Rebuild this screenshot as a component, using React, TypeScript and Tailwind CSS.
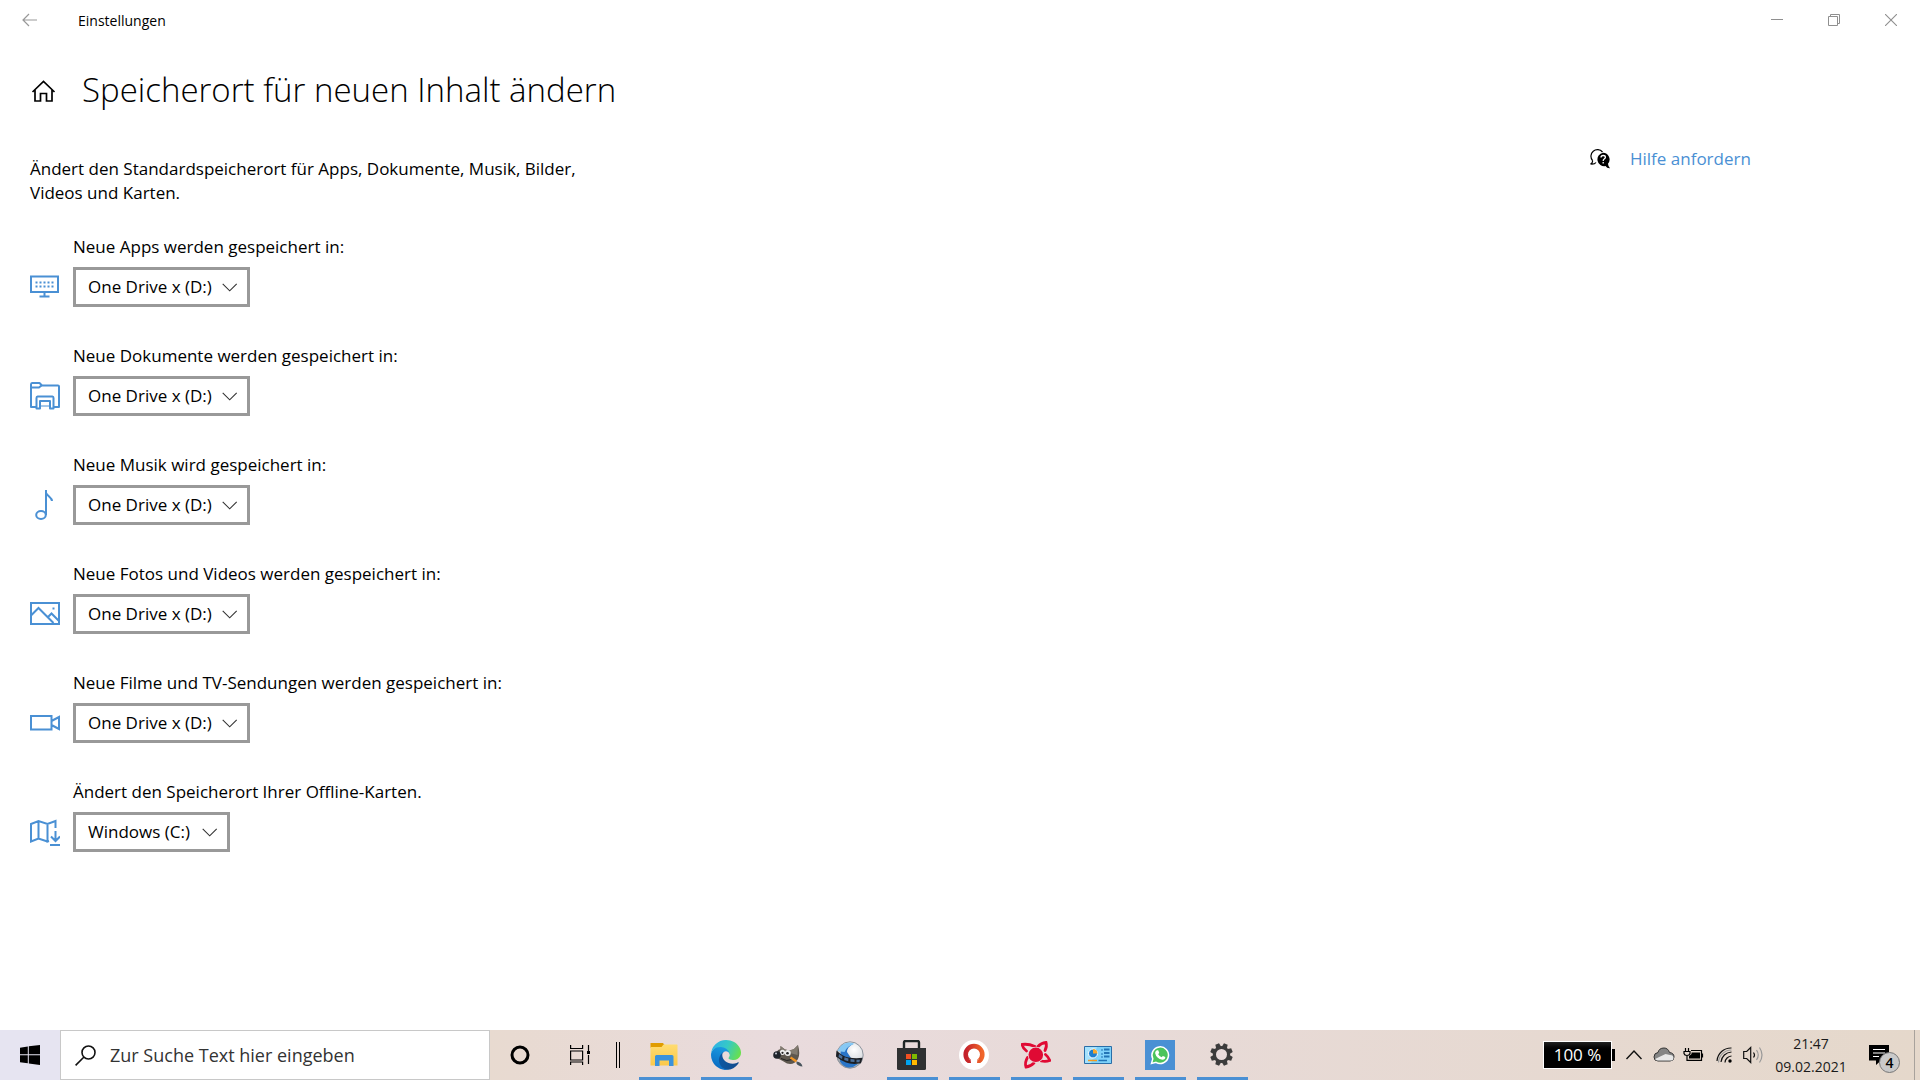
import type { ReactNode } from "react";

const BLUE = "#4a90d4";

/* ---------- content icons ---------- */

function Monitor() {
  return (
    <svg width="30" height="30" viewBox="0 0 30 30" fill="none" stroke={BLUE} strokeWidth="2">
      <path d="M1 4.500h27v15.500H1zM14.500 20.500v4M9.500 24.500h10" />
      <path d="M5.500 10.500h18M5.500 14.500h18" strokeDasharray="2 2" />
    </svg>
  );
}

function Folder() {
  return (
    <svg width="30" height="30" viewBox="0 0 30 30" fill="none" stroke={BLUE} strokeWidth="2" strokeLinejoin="round">
      <path d="M6 26H1V3.500q0-1.500 1-1.500h7.500l2.500 2.500H28q1 0 1 1V26h-5" />
      <path d="M1 6.500h8l2.500-2" />
      <path d="M6.500 27.500V17q0-1.500 1-1.500h15q1 0 1 1.500v10.500h-3.500V20H10v7.500z" />
      <path d="M10 25h10" strokeWidth="1" />
    </svg>
  );
}

function Note() {
  return (
    <svg width="30" height="30" viewBox="0 0 30 30" fill="none" stroke={BLUE} strokeWidth="2">
      <ellipse cx="11" cy="25" rx="4.800" ry="3.900" />
      <path d="M16 25V0M16 3c2 3.500 6 4.500 6 8" />
    </svg>
  );
}

function Picture() {
  return (
    <svg width="30" height="30" viewBox="0 0 30 30" fill="none" stroke={BLUE} strokeWidth="2">
      <path d="M1 4h28v21H1zM1 16.500l7.500-7.500L23.500 24M17.500 18.500l4-4L28.500 21.500" />
      <path d="M22.500 9.500h2" />
    </svg>
  );
}

function Camera() {
  return (
    <svg width="30" height="30" viewBox="0 0 30 30" fill="none" stroke={BLUE} strokeWidth="2">
      <path d="M1 8h20.500v13.500H1zM21.500 13l7.500-4v12l-7.500-4" />
    </svg>
  );
}

function OfflineMap() {
  return (
    <svg width="30" height="30" viewBox="0 0 30 30" fill="none" stroke={BLUE} strokeWidth="2">
      <path d="M17.500 24.500L8.500 21.500 1 24.500V7l7.500-3 9 3L25.500 4v7M8.500 4v17.500M17.500 7v17.500l1.500-.5M25.500 14v10M21 19.500l4.500 4.500 4.500-4.500M20 28h10" />
    </svg>
  );
}

/* ---------- storage rows ---------- */

type Row = { id: string; label: string; value: string; icon: ReactNode; width: string };

const rows: Row[] = [
  { id: "apps", label: "Neue Apps werden gespeichert in:", value: "One Drive x (D:)", icon: <Monitor />, width: "w-[177px]" },
  { id: "docs", label: "Neue Dokumente werden gespeichert in:", value: "One Drive x (D:)", icon: <Folder />, width: "w-[177px]" },
  { id: "music", label: "Neue Musik wird gespeichert in:", value: "One Drive x (D:)", icon: <Note />, width: "w-[177px]" },
  { id: "photos", label: "Neue Fotos und Videos werden gespeichert in:", value: "One Drive x (D:)", icon: <Picture />, width: "w-[177px]" },
  { id: "films", label: "Neue Filme und TV-Sendungen werden gespeichert in:", value: "One Drive x (D:)", icon: <Camera />, width: "w-[177px]" },
  { id: "maps", label: "Ändert den Speicherort Ihrer Offline-Karten.", value: "Windows (C:)", icon: <OfflineMap />, width: "w-[157px]" },
];

function StorageRow({ row }: { row: Row }) {
  return (
    <div className="grid grid-cols-[43px_auto] justify-start gap-y-2">
      <label htmlFor={row.id} className="col-start-2 leading-6">
        {row.label}
      </label>
      <span className="row-start-2 flex items-center">{row.icon}</span>
      <div className={`relative row-start-2 ${row.width}`}>
        <select
          id={row.id}
          defaultValue={row.value}
          className="block h-10 w-full appearance-none border-3 border-[#999999] bg-white pl-3 text-[17px]"
        >
          <option>{row.value}</option>
        </select>
        <svg className="pointer-events-none absolute top-4 right-3" width="16" height="9" viewBox="0 0 16 9" fill="none" stroke="#333" strokeWidth="1.1">
          <path d="M.7 .8l7 7 7-7" />
        </svg>
      </div>
    </div>
  );
}

/* ---------- taskbar icons ---------- */

function Explorer() {
  return (
    <svg width="30" height="30" viewBox="0 0 30 30">
      <defs>
        <linearGradient id="fold" x1="0" y1="0" x2="0" y2="1">
          <stop offset="0" stopColor="#ffdc70" />
          <stop offset="1" stopColor="#fbc84a" />
        </linearGradient>
      </defs>
      <path d="M1.500 3h12.500l1.500 2-2 3h-12z" fill="#e09c00" />
      <path d="M1.500 7h11l2-2.500h13.500q.5 0 .5.500v20.500h-27z" fill="url(#fold)" />
      <path d="M6 26V16.500q0-1.500 1.500-1.500h15.500q1.500 0 1.500 1.500V26h-4.500v-5.500h-9.500V26z" fill="#3a92dc" />
    </svg>
  );
}

function Edge() {
  return (
    <svg width="30" height="30" viewBox="0 0 256 256">
      <defs>
        <linearGradient id="e1" x1="0" x2="1">
          <stop offset="0" stopColor="#0c59a4" />
          <stop offset="1" stopColor="#114a8b" />
        </linearGradient>
        <linearGradient id="e2" x1="0.6" y1="0" x2="0.3" y2="1">
          <stop offset="0" stopColor="#1b9de2" />
          <stop offset="1" stopColor="#0767c0" />
        </linearGradient>
        <linearGradient id="e3" x1="0" y1="0.3" x2="1" y2="0.6">
          <stop offset="0" stopColor="#2fb0e8" />
          <stop offset="0.5" stopColor="#36c9c6" />
          <stop offset="1" stopColor="#69e04c" />
        </linearGradient>
      </defs>
      <path fill="url(#e1)" d="M231 190.500c-3.400 1.800-6.900 3.400-10.500 4.700a102 102 0 0 1-35.900 6.500c-47.300 0-88.500-32.500-88.500-74.300.1-11.400 6.400-21.900 16.400-27.300-42.800 1.800-53.800 46.400-53.800 72.500 0 74 68.100 81.400 82.800 81.400 7.900 0 19.800-2.300 27-4.600l1.300-.4a128.300 128.300 0 0 0 66.600-52.800 4 4 0 0 0-5.400-5.700z" />
      <path fill="url(#e2)" d="M105.700 241.400a79.200 79.200 0 0 1-22.700-21.300 80.700 80.700 0 0 1 29.500-120c3.200-1.500 8.500-4.200 15.600-4.100a32.400 32.400 0 0 1 25.700 13 31.900 31.900 0 0 1 6.300 18.700c0-.2 24.500-79.600-80-79.600-43.900 0-80 41.600-80 78.200a130.200 130.200 0 0 0 12.100 56 128 128 0 0 0 156.400 67 75.600 75.600 0 0 1-62.800-8z" />
      <path fill="url(#e3)" d="M152.300 148.900c-.9 1-3.300 2.500-3.300 5.700 0 2.600 1.700 5.100 4.700 7.200 14.400 10 41.500 8.700 41.600 8.700 10.700 0 21.100-2.900 30.300-8.300A61.400 61.400 0 0 0 256 109.200c.3-22.400-8-37.300-11.300-43.900C223.500 23.900 177.700 0 128 0A128 128 0 0 0 0 126.200c.5-36.500 36.800-66 80-66 3.500 0 23.500.3 42 10 16.300 8.600 24.900 18.900 30.800 29.200 6.200 10.700 7.300 24.100 7.300 29.500s-2.700 13.300-7.800 20z" />
    </svg>
  );
}

function Gimp() {
  return (
    <svg width="30" height="30" viewBox="0 0 30 30">
      <path d="M7.500 6l4.500 3.500q6 1.500 9-.5l4-4q2.500 9 0 14-4 6.500-11 4.500-4-2.500-11-6-1-7 4.500-8.500z" fill="#5d574e" />
      <path d="M7.500 6l4.500 3.500q6 1.500 9-.5l4-4-.5 10q-9-3-17-3z" fill="#827b70" />
      <circle cx="9.500" cy="12.300" r="2.600" fill="#eee" />
      <circle cx="14.800" cy="13" r="3" fill="#eee" />
      <circle cx="9.500" cy="12.800" r="1.100" fill="#222" />
      <circle cx="14.500" cy="13.300" r="1.300" fill="#222" />
      <ellipse cx="4" cy="15" rx="3.800" ry="3.800" fill="#20242b" />
      <circle cx="3" cy="13.500" r="1" fill="#c7cdd6" />
      <path d="M8 18.500q6 3.500 11 1" stroke="#222" fill="none" />
      <path d="M17.500 17.500l6 4" stroke="#ef9424" strokeWidth="2.200" />
      <path d="M23.500 21.500q5 .5 6 5-4.500-.5-6-3z" fill="#49545c" />
    </svg>
  );
}

function OpenShot() {
  return (
    <svg width="30" height="30" viewBox="0 0 30 30">
      <defs>
        <radialGradient id="os" cx="0.65" cy="0.3" r="0.8">
          <stop offset="0" stopColor="#fff" />
          <stop offset="0.6" stopColor="#d5d8dc" />
          <stop offset="1" stopColor="#8a9098" />
        </radialGradient>
      </defs>
      <circle cx="15" cy="15" r="13.200" fill="url(#os)" stroke="#8d949d" strokeWidth="1" />
      <path d="M6 6Q12 3 18 4q-6 3-6 8l4 6q2 6 7 6-5 4-10 3.500-5-1-8-6z" fill="#2a75c8" />
      <path d="M2.500 11Q6 3 14 2.500q4 0 5 1.500-7 2-9.500 8z" fill="#86c8f4" />
      <path d="M1.500 10.500q6 6 12 7 7 1.200 14 .3l-1.500 5.500q-9 1.500-15-.8-5.500-2-10-6z" fill="#1c1f24" />
      <path d="M4 14l3.500 2.200-.5 2.800-3.500-2zM9.500 17.200l4 1.300-.3 2.800-4-1.300zM15.500 19l4 .4v2.700l-4-.4zM21.500 19.800h3.500l-.6 2.400h-3z" fill="#4d7099" />
    </svg>
  );
}

function Store() {
  return (
    <svg width="30" height="30" viewBox="0 0 30 30">
      <path d="M7 9V2.500Q7 1 8.500 1h12Q22 1 22 2.500V9" fill="none" stroke="#1f2626" strokeWidth="2.400" />
      <path d="M0 8h29v20.500q0 1.500-1.500 1.500h-26Q0 30 0 28.500z" fill="#2f3132" />
      <path d="M9 14h5v5H9z" fill="#f25022" />
      <path d="M15 14h5v5h-5z" fill="#7fba00" />
      <path d="M9 20h5v5H9z" fill="#00a4ef" />
      <path d="M15 20h5v5h-5z" fill="#ffb900" />
    </svg>
  );
}

function Horseshoe() {
  return (
    <svg width="30" height="30" viewBox="0 0 30 30">
      <defs>
        <linearGradient id="hs">
          <stop offset="0" stopColor="#c4212b" />
          <stop offset="1" stopColor="#f0652a" />
        </linearGradient>
      </defs>
      <circle cx="15" cy="15" r="15" fill="#fff" />
      <path d="M9.300 20.500a8.300 8.300 0 1 1 11.400 0" fill="none" stroke="url(#hs)" strokeWidth="4.600" />
      <path d="M7 20.500l4.500-1.500.5 4H8.500z" fill="#c92a2b" />
      <path d="M23 20.500L18.500 19l-.5 4h3.500z" fill="#e9592a" />
    </svg>
  );
}

function RedStar() {
  return (
    <svg width="30" height="30" viewBox="0 0 30 30">
      <g fill="none" stroke="#e00a34" strokeWidth="2.200" strokeLinecap="round">
        <path d="M5.500 11Q1.500 8 1.200 4.500 7 3.500 14 6.500" strokeWidth="2.800" />
        <path d="M17 6.500Q20 3 25 2.500q1.200 4-1 8" strokeWidth="2.800" />
        <path d="M24.500 14.500q3 2.500 4.300 6-4 1.500-8.500.5" strokeWidth="2.800" />
        <path d="M6.500 17.500Q3.500 22.500 5 27q4.500-.5 8-4" strokeWidth="2.800" />
      </g>
      <circle cx="14.800" cy="14.800" r="8" fill="#e9dbdd" />
      <circle cx="14.800" cy="14.800" r="7.300" fill="#e00a34" />
    </svg>
  );
}

function ControlPanel() {
  return (
    <svg width="30" height="30" viewBox="0 0 30 30">
      <path d="M1.500 6.500h27v17h-27z" fill="#7fd2fa" stroke="#2a6ea8" />
      <path d="M2 23V7h12L8 23z" fill="#a5e2fd" />
      <circle cx="10" cy="13.500" r="4.500" fill="#1c7fd0" stroke="#fff" />
      <path d="M10 13.500V9a4.500 4.500 0 0 1 4.500 4.500z" fill="#f7a72b" />
      <path d="M18 10h2m-2 4h2m-2 3h2" stroke="#2374b5" />
      <path d="M21 9.500h5.500M21 13h5.500M21 16.500h5.500" stroke="#2374b5" strokeWidth="2" />
      <path d="M5 20.500h9" stroke="#f39a1e" strokeWidth="1.500" />
      <path d="M15.500 20.500H24" stroke="#2374b5" strokeWidth="1.500" />
    </svg>
  );
}

function WhatsApp() {
  return (
    <svg width="30" height="30" viewBox="0 0 30 30">
      <path d="M0 0h30v30H0z" fill={BLUE} />
      <path d="M6.500 23.500l1.300-4.600A8.300 8.300 0 1 1 11 22.300z" fill="#4cc45c" stroke="#fff" strokeWidth="1.500" />
      <path d="M11.800 10.200l1.400.1 1 2.500-1 1.400q1.200 2.200 3.400 3.100l1.300-1.400 2.400 1.200q0 2.700-3 2.600-5.900-1-7.200-6.700 0-1.900 1.700-2.800z" fill="#fff" />
    </svg>
  );
}

function Gear() {
  return (
    <svg width="30" height="30" viewBox="-14.5 -14.5 30 30">
      <g fill="#3c3c3c">
        {[22.5, 67.5, 112.5, 157.5].map((a) => (
          <path key={a} d="M-2-11.300h4l.8 4.500v13.600l-.8 4.500h-4l-.8-4.500V-6.800z" transform={`rotate(${a})`} />
        ))}
        <circle r="8.600" />
      </g>
      <circle r="5.500" fill="#e9dcdc" />
    </svg>
  );
}

type App = { name: string; icon: ReactNode; open: boolean };

const apps: App[] = [
  { name: "Explorer", icon: <Explorer />, open: true },
  { name: "Edge", icon: <Edge />, open: true },
  { name: "GIMP", icon: <Gimp />, open: false },
  { name: "OpenShot", icon: <OpenShot />, open: false },
  { name: "Store", icon: <Store />, open: true },
  { name: "Ashampoo", icon: <Horseshoe />, open: true },
  { name: "Mediaplayer", icon: <RedStar />, open: true },
  { name: "Systemsteuerung", icon: <ControlPanel />, open: true },
  { name: "WhatsApp", icon: <WhatsApp />, open: true },
  { name: "Einstellungen", icon: <Gear />, open: true },
];

function Taskbar() {
  return (
    <footer className="flex h-[50px] items-stretch">
      <button aria-label="Start" className="flex w-[60px] items-center justify-center bg-[#e6e4f1]">
        <svg width="20" height="20" viewBox="0 0 20 20">
          <path d="M0 2.700L7.800 1.500V9.300H0zM8.800 1.300L20 0v9.300H8.800zM0 10.300h7.800v8L0 17.200zM8.800 10.300H20V20L8.800 18.500z" />
        </svg>
      </button>
      <div className="flex w-[430px] items-center gap-3.5 border border-[#c8c8c8] bg-white pl-3.5">
        <svg width="21" height="21" viewBox="0 0 21 21" fill="none" stroke="#111" strokeWidth="1.600">
          <circle cx="13.500" cy="7.500" r="6.500" />
          <path d="M9 12L.6 20.400" />
        </svg>
        <input
          aria-label="Suche"
          placeholder="Zur Suche Text hier eingeben"
          className="min-w-0 flex-1 bg-transparent text-[18px] outline-none placeholder:text-[#333]"
        />
      </div>
      <div className="flex flex-1 bg-linear-to-r from-[#e8dad0] via-[#e9dbdd] via-20% to-[#e5d8cb]">
        <button aria-label="Cortana" className="flex w-[60px] items-center justify-center">
          <svg width="20" height="20" viewBox="0 0 20 20" fill="none" stroke="#000" strokeWidth="3">
            <circle cx="10" cy="10" r="8" />
          </svg>
        </button>
        <button aria-label="Taskansicht" className="flex w-[60px] items-center justify-center">
          <svg width="20" height="20" viewBox="0 0 20 20" fill="none" stroke="#000" strokeWidth="1.200">
            <path d="M.6 0v3.500h12V0M.6 6h12v9H.6zM.6 20v-3h12v3M18.500 0v6M18.500 10v9" />
            <path d="M17 6h3v3h-3z" fill="#000" stroke="none" />
          </svg>
        </button>
        <div className="mr-2 flex w-[15px] items-center justify-center">
          <span className="h-[26px] w-1 border-x border-black" />
        </div>
        {apps.map((app) => (
          <button key={app.name} aria-label={app.name} className="flex w-[62px] flex-col items-center justify-between">
            <span className="pt-2.5">{app.icon}</span>
            {app.open && <span className="h-[3px] w-[51px] bg-[#4a90d4]" />}
          </button>
        ))}

        <div className="ml-auto flex items-center">
          <div className="flex items-center">
            <span className="flex h-[28px] w-[69px] items-center justify-center border border-white bg-linear-to-b from-[#222] to-black to-40% text-[17px] text-white">
              100 %
            </span>
            <span className="h-3 w-[3px] bg-black" />
          </div>
          <button aria-label="Ausgeblendete Symbole" className="ml-2.5">
            <svg width="18" height="20" viewBox="0 0 18 20" fill="none" stroke="#111" strokeWidth="1.400">
              <path d="M1.500 14L9 6l7.500 8" />
            </svg>
          </button>
          <svg className="ml-2.5" width="22" height="20" viewBox="0 0 22 20" stroke="#333" strokeWidth="1">
            <path d="M5 16Q1 16 1 12t4-4.500q1-4.500 6-4.500 4 0 5.500 4.500Q21 8 21 12t-4 4z" fill="#858585" />
            <path d="M5 15.500q-2 0-3-1.500L12.500 9 17 10q3.500 0 3.500 3T17 15.500z" fill="#e8e8e8" stroke="none" />
          </svg>
          <svg className="ml-2" width="21" height="20" viewBox="0 0 21 20" fill="none" stroke="#000" strokeWidth="1.200">
            <path d="M2.500 3v3M5.500 3v3M1 6.500h6v2Q6.500 10.500 4 10.500T1 8.500zM4 10.500V15.400h14.500V5.500H8M19.500 8.500v4" />
            <path d="M8.500 7.500h8.500v6H6v-2.500l2.500-2z" fill="#000" stroke="none" />
          </svg>
          <svg className="ml-3" width="17" height="20" viewBox="0 0 17 20" fill="none" stroke="#111" strokeWidth="1.200">
            <path d="M1 16A14 14 0 0 1 15.500 3M5 17A11 11 0 0 1 15.500 7M9 17.500A7 7 0 0 1 15.500 11" />
            <path d="M2.500 17.500A13 13 0 0 1 15.500 5" stroke="#999" />
            <circle cx="14" cy="16" r="1.700" fill="#000" stroke="none" />
          </svg>
          <svg className="ml-2.5" width="21" height="20" viewBox="0 0 21 20" fill="none" stroke="#111" strokeWidth="1.200">
            <path d="M.7 6.500h3l4-4v15l-4-4h-3z" />
            <path d="M10.500 7.500q2 2.500 0 5" />
            <path d="M13.500 5q3.500 5 0 10M16.500 2.500q5 7.500 0 15" stroke="#999" />
          </svg>
          <div className="ml-2.5 w-[74px] text-center text-[14px] leading-[23px] whitespace-nowrap text-[#1a1a1a]">
            <div>21:47</div>
            <div>09.02.2021</div>
          </div>
          <button aria-label="4 Benachrichtigungen" className="relative ml-[21px] h-8 w-[31px]">
            <svg width="20" height="20" viewBox="0 0 20 20">
              <path d="M0 0h20v15.500h-8L7 20v-4.500H0z" />
              <path d="M4 4.500h12M4 8h12M4 11.500h6" stroke="#fff" strokeWidth="1.200" />
            </svg>
            <span className="absolute right-0 -bottom-0.5 flex size-[21px] items-center justify-center rounded-full border border-[#777] bg-[#c9c9c9] text-[14px] font-semibold leading-none">
              4
            </span>
          </button>
          <span className="ml-[14px] h-[50px] w-1.5 border-l border-[#a8a29c]" />
        </div>
      </div>
    </footer>
  );
}

/* ---------- page ---------- */

export default function App() {
  return (
    <div className="flex min-h-screen flex-col bg-white font-['Open_Sans',sans-serif] text-[17px] text-black">
      <header className="flex h-10 items-center">
        <button aria-label="Zurück" className="flex w-[58px] justify-center">
          <svg width="15" height="14" viewBox="0 0 15 14" fill="none" stroke="#999" strokeWidth="1.200">
            <path d="M15 7H1M7 1L1 7l6 6" />
          </svg>
        </button>
        <span className="ml-5 text-[14px]">Einstellungen</span>
        <div className="ml-auto flex pr-px">
          <button aria-label="Minimieren" className="flex h-10 w-[57px] items-center justify-center">
            <svg width="12" height="12" viewBox="0 0 12 12" stroke="#8f8f8f">
              <path d="M0 5.500h12" />
            </svg>
          </button>
          <button aria-label="Wiederherstellen" className="flex h-10 w-[57px] items-center justify-center">
            <svg width="12" height="12" viewBox="0 0 12 12" fill="none" stroke="#8f8f8f">
              <path d="M.5 2.500h9v9h-9zM2.500 2.500v-2h9v9h-2" />
            </svg>
          </button>
          <button aria-label="Schließen" className="flex h-10 w-[57px] items-center justify-center">
            <svg width="12" height="12" viewBox="0 0 12 12" stroke="#8f8f8f" strokeWidth="1.100">
              <path d="M0 0l12 12M12 0L0 12" />
            </svg>
          </button>
        </div>
      </header>

      <div className="flex h-[101px] items-center gap-[26px] pl-[30px]">
        <a href="#start" aria-label="Startseite">
          <svg width="26" height="22" viewBox="0 0 26 22" fill="none" stroke="#000" strokeWidth="1.700">
            <path d="M2.500 12L13.500 1.500 24.500 12M5 10V21h5.500v-7.500h6V21H22V10" />
          </svg>
        </a>
        <h1 className="pb-0.5 text-[33px] font-light leading-[44px]">Speicherort für neuen Inhalt ändern</h1>
      </div>

      <div className="flex flex-1 justify-between pl-[30px]">
        <main className="pt-4">
          <p className="w-[560px] leading-6">
            Ändert den Standardspeicherort für Apps, Dokumente, Musik, Bilder,
            <br />
            Videos und Karten.
          </p>
          <form className="mt-[30px] flex flex-col gap-[37px]">
            {rows.map((row) => (
              <StorageRow key={row.id} row={row} />
            ))}
          </form>
        </main>
        <aside className="w-[330px] pt-1.5">
          <a href="#hilfe" className="flex items-center gap-5 leading-6 text-[#4a90d4]">
            <svg width="20" height="20" viewBox="0 0 20 20">
              <path d="M2.500 11.500A6.200 6.200 0 1 1 12.500 3M2.500 11.500q.5 2.500-2 3.500 4 .5 5.500-1.500" fill="none" stroke="#000" strokeWidth="1.200" />
              <path d="M13 3.700a6.700 6.700 0 0 1 5 11q.2 3 2 4.600-3 .2-4.500-2.200A6.700 6.700 0 1 1 13 3.700z" />
              <path d="M11 8.500q0-2 2.200-2t2.200 1.800q0 1-1.200 1.700-1 .6-1 2M13.200 13v1.600" fill="none" stroke="#fff" strokeWidth="1.300" />
            </svg>
            Hilfe anfordern
          </a>
        </aside>
      </div>

      <Taskbar />
    </div>
  );
}
